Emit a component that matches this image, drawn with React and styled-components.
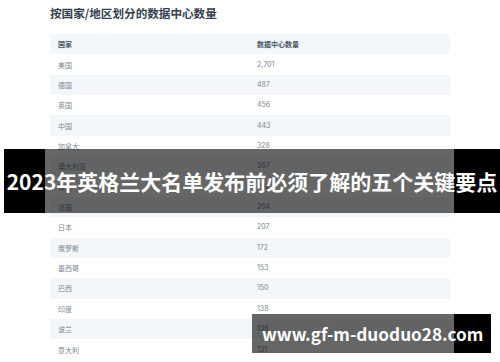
import React from "react";
import styled, { createGlobalStyle } from "styled-components";

const Global = createGlobalStyle`
  html, body { margin: 0; padding: 0; background: #ffffff; }
  body { font-family: "Noto Sans CJK SC", "Noto Sans", sans-serif; overflow: hidden; }
`;

const Page = styled.div`
  position: relative;
  width: 500px;
  height: 362px;
  overflow: hidden;
  padding: 0 50px;
  box-sizing: border-box;
`;

const Title = styled.h2`
  margin: 0;
  padding-top: 5px;
  font-size: 11.6px;
  line-height: 16px;
  font-weight: 700;
  color: #36404e;
  font-family: "Noto Sans CJK SC", sans-serif;
`;

const Table = styled.div`
  margin-top: 13px;
  display: flex;
  flex-direction: column;
`;

const Row = styled.div`
  display: grid;
  grid-template-columns: 199px 1fr;
  height: 20.37px;
  align-items: center;
  background: ${(p) => (p.$striped ? "#f3f7fa" : "#ffffff")};
`;

const Cell = styled.div`
  padding-left: 8px;
  font-size: 7px;
  line-height: 10px;
  color: ${(p) => (p.$head ? "#4a5462" : "#7b8592")};
  font-weight: ${(p) => (p.$head ? 700 : 400)};
  font-family: ${(p) => (p.$num ? '"Inter", "Noto Sans", sans-serif' : '"Noto Sans CJK SC", sans-serif')};
`;

const Banner = styled.div`
  position: absolute;
  top: ${(p) => p.$top}px;
  left: ${(p) => p.$left}px;
  width: ${(p) => p.$width}px;
  height: ${(p) => p.$height}px;
  display: flex;
  align-items: center;
  justify-content: ${(p) => (p.$center ? "center" : "flex-start")};
  padding-left: ${(p) => p.$pad || 0}px;
  box-sizing: border-box;
  background: linear-gradient(
    to right,
    ${(p) => (p.$blackLeft ? `#000 0 ${p.$blackLeft}px,` : "")}
    rgba(0, 0, 0, 0.6) ${(p) => p.$blackLeft || 0}px ${(p) => p.$greyEnd}px,
    #000 ${(p) => p.$greyEnd}px
  );
  color: #ffffff;
  font-family: "Noto Sans CJK SC", "Noto Sans", sans-serif;
  font-weight: 700;
  font-size: ${(p) => p.$size}px;
  white-space: nowrap;
`;

const data = [
  ["美国", "2,701"],
  ["德国", "487"],
  ["英国", "456"],
  ["中国", "443"],
  ["加拿大", "328"],
  ["澳大利亚", "287"],
  ["荷兰", "282"],
  ["法国", "264"],
  ["日本", "207"],
  ["俄罗斯", "172"],
  ["墨西哥", "153"],
  ["巴西", "150"],
  ["印度", "138"],
  ["波兰", "136"],
  ["意大利", "131"],
];

export default function App() {
  return (
    <>
      <Global />
      <Page>
        <Title>按国家/地区划分的数据中心数量</Title>
        <Table>
          <Row $striped>
            <Cell $head>国家</Cell>
            <Cell $head>数据中心数量</Cell>
          </Row>
          {data.map(([c, n], i) => (
            <Row key={c} $striped={i % 2 === 1}>
              <Cell>{c}</Cell>
              <Cell $num>{n}</Cell>
            </Row>
          ))}
        </Table>
        <Banner $top={149} $left={4} $width={496} $height={64} $blackLeft={41} $greyEnd={450} $size={21} $center>
          2023年英格兰大名单发布前必须了解的五个关键要点
        </Banner>
        <Banner $top={314} $left={252} $width={239} $height={39} $greyEnd={202} $size={17.2} $pad={10}>
          www.gf-m-duoduo28.com
        </Banner>
      </Page>
    </>
  );
}
